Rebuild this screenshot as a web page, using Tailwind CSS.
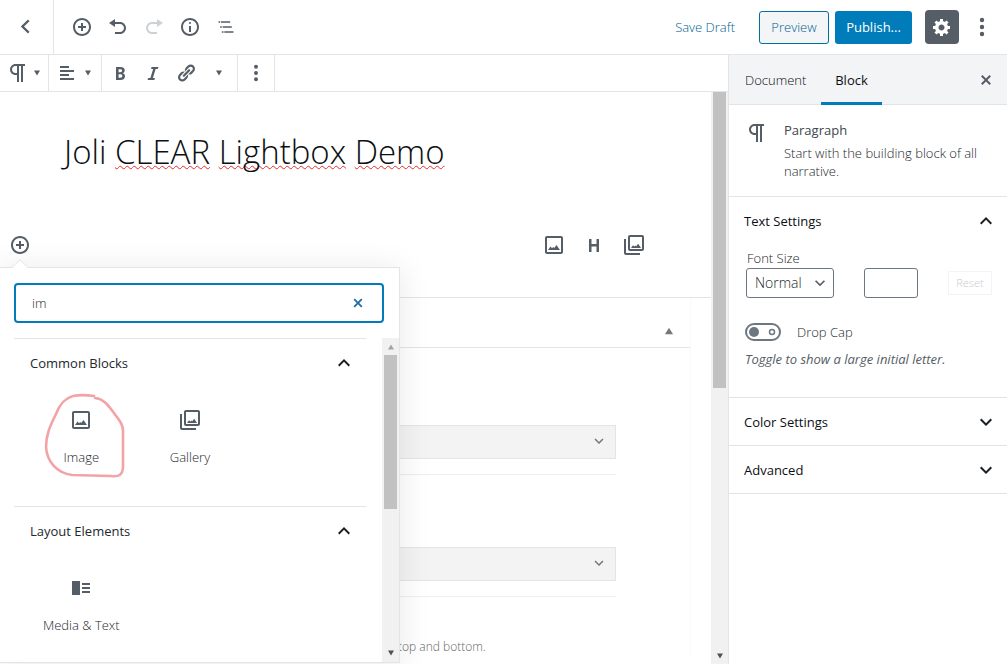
<!DOCTYPE html>
<html lang="en">
<head>
<meta charset="utf-8">
<title>Edit Page</title>
<script src="https://cdn.jsdelivr.net/npm/@tailwindcss/browser@4"></script>
</head>
<body class="h-screen overflow-hidden bg-white font-['Open_Sans',sans-serif] text-[13px] leading-[18px] font-light text-[#23282d]">
<svg class="hidden">
  <symbol id="plus" viewBox="0 0 20 20"><path d="M10 1c-5 0-9 4-9 9s4 9 9 9 9-4 9-9-4-9-9-9zm0 16c-3.9 0-7-3.1-7-7s3.1-7 7-7 7 3.1 7 7-3.1 7-7 7zm1-11H9v3H6v2h3v3h2v-3h3V9h-3V6z"/></symbol>
  <symbol id="image" viewBox="0 0 24 24"><path d="M19 5v14H5V5h14m0-2H5c-1.100 0-2 .9-2 2v14c0 1.100.9 2 2 2h14c1.100 0 2-.9 2-2V5c0-1.100-.9-2-2-2z"/><path d="M6 17l2.500-3.400 1.500 1.600 1.200-1.200 1 1 2.300-3L18 17z"/></symbol>
  <symbol id="gallery" viewBox="0 0 24 24"><path d="M20 4v12H8V4h12m0-2H8c-1.100 0-2 .9-2 2v12c0 1.100.9 2 2 2h12c1.100 0 2-.9 2-2V4c0-1.100-.9-2-2-2z"/><path d="M9 15l2-2.800 1.400 1.300 1-1 .8.8 2-2.500L19 15z"/><path d="M2 6v14c0 1.100.9 2 2 2h14v-2H4V6z"/></symbol>
  <symbol id="para" viewBox="0 0 24 24"><path d="M11 5v7H9.500C7.600 12 6 10.400 6 8.500S7.600 5 9.500 5H11m8-2H9.500C6.500 3 4 5.500 4 8.500S6.500 14 9.500 14H11v7h2V5h2v16h2V5h2V3z"/></symbol>
  <symbol id="up" viewBox="0 0 24 24"><path d="M7.410 15.410 12 10.830l4.590 4.580L18 14l-6-6-6 6z"/></symbol>
  <symbol id="down" viewBox="0 0 24 24"><path d="M7.410 8.590 12 13.170l4.590-4.580L18 10l-6 6-6-6z"/></symbol>
  <symbol id="caret" viewBox="0 0 6 6"><path d="M0 .5h6L3 5.500z"/></symbol>
  <symbol id="dots" viewBox="0 0 20 20"><circle cx="10" cy="3" r="2.200"/><circle cx="10" cy="10" r="2.200"/><circle cx="10" cy="17" r="2.200"/></symbol>
  <symbol id="close" viewBox="0 0 20 20"><path d="M14.950 6.460L11.410 10l3.540 3.540-1.410 1.410L10 11.420l-3.530 3.530-1.420-1.420L8.580 10 5.050 6.470l1.420-1.420L10 8.580l3.540-3.530z"/></symbol>
</svg>
<div class="flex h-full flex-col">
  <header class="flex h-[55px] shrink-0 items-center border-b border-[#e2e4e7]">
    <a href="#" aria-label="Back" class="flex h-full w-[54px] items-center justify-center border-r border-[#e2e4e7]"><svg class="size-5 fill-[#555d66]" viewBox="0 0 20 20"><path d="M12.500 4.200 7 9.500l5.500 5.300-1.500 1.700L3.800 9.500l7.200-7z"/></svg></a>
    <div class="flex flex-1 items-center gap-4 pl-[18px]">
      <button aria-label="Add block"><svg class="size-5 fill-[#555d66]"><use href="#plus"/></svg></button>
      <button aria-label="Undo"><svg class="size-5 fill-[#555d66]" viewBox="0 0 20 20"><path d="M12 5H7V2L1 6l6 4V7h5c2.200 0 4 1.800 4 4s-1.800 4-4 4H7v2h5c3.300 0 6-2.700 6-6s-2.700-6-6-6z"/></svg></button>
      <button aria-label="Redo" disabled><svg class="size-5 fill-[#cfd2d5]" viewBox="0 0 20 20"><path d="M8 5h5V2l6 4-6 4V7H8c-2.200 0-4 1.800-4 4s1.800 4 4 4h5v2H8c-3.300 0-6-2.700-6-6s2.700-6 6-6z"/></svg></button>
      <button aria-label="Content structure"><svg class="size-5 fill-[#555d66]" viewBox="0 0 20 20"><path d="M9 15h2V9H9v6zm1-10c-.5 0-1 .5-1 1s.5 1 1 1 1-.5 1-1-.5-1-1-1zm0-4c-5 0-9 4-9 9s4 9 9 9 9-4 9-9-4-9-9-9zm0 16c-3.900 0-7-3.100-7-7s3.100-7 7-7 7 3.100 7 7-3.100 7-7 7z"/></svg></button>
      <button aria-label="Block navigation"><svg class="size-5 fill-[#555d66]" viewBox="0 0 24 24"><path d="M5 5H3v2h2V5zm3 8h11v-2H8v2zm9-8H6v2h11V5zM7 11H5v2h2v-2zm0 8h2v-2H7v2zm3-2v2h11v-2H10z"/></svg></button>
    </div>
    <div class="flex items-center pr-[15px]">
      <button class="mr-6 text-[#005f95]">Save Draft</button>
      <button class="mr-1.5 h-[33px] w-[70px] rounded-[3px] border border-[#0071a1] bg-[#f3f5f6] text-[#005f95]">Preview</button>
      <button class="mr-[13px] h-[33px] w-[77px] rounded-[3px] bg-[#007cba] font-medium text-white">Publish...</button>
      <button aria-label="Settings" class="mr-[13px] flex size-[34px] items-center justify-center rounded bg-[#555d66]"><svg class="size-5 fill-white" viewBox="0 0 20 20"><path d="M18 12h-2.180c-.17.7-.44 1.350-.81 1.930l1.540 1.540-2.100 2.100-1.540-1.540c-.58.36-1.230.63-1.910.79V19H8v-2.180c-.68-.16-1.330-.43-1.910-.79l-1.540 1.540-2.120-2.120 1.540-1.540c-.36-.58-.63-1.230-.79-1.910H1V9.030h2.170c.16-.7.44-1.350.8-1.940L2.430 5.550l2.100-2.100 1.540 1.540c.58-.37 1.240-.64 1.930-.81V2h3v2.180c.68.16 1.330.43 1.910.79l1.540-1.540 2.120 2.120-1.540 1.540c.36.59.64 1.240.8 1.940H18V12zm-8.500 1.500c1.660 0 3-1.340 3-3s-1.340-3-3-3-3 1.340-3 3 1.340 3 3 3z"/></svg></button>
      <button aria-label="More"><svg class="size-5 fill-[#555d66]"><use href="#dots"/></svg></button>
    </div>
  </header>

  <div class="flex min-h-0 flex-1">
    <main class="flex min-w-0 flex-1 flex-col">
      <div class="flex h-[37px] shrink-0 border-b border-[#e2e4e7]">
        <button aria-label="Change block type" class="flex w-[49px] items-center gap-1 border-r border-[#e2e4e7] pl-[6px]"><svg class="size-6 fill-[#555d66]"><use href="#para"/></svg><svg class="size-[6px] fill-[#555d66]"><use href="#caret"/></svg></button>
        <button aria-label="Align" class="flex w-[53px] items-center gap-2 border-r border-[#e2e4e7] pl-2"><svg class="size-5 fill-[#555d66]" viewBox="0 0 20 20"><path d="M12 5V3H3v2h9zm5 4V7H3v2h14zm-5 4v-2H3v2h9zm5 4v-2H3v2h14z"/></svg><svg class="size-[6px] fill-[#555d66]"><use href="#caret"/></svg></button>
        <div class="flex w-[136px] items-center gap-[13px] border-r border-[#e2e4e7] pl-2">
          <button aria-label="Bold"><svg class="size-5 fill-[#555d66]" viewBox="0 0 20 20"><path d="M6 4v13h4.540c1.370 0 2.460-.33 3.260-1 .8-.66 1.200-1.580 1.200-2.770 0-.84-.17-1.510-.51-2.010s-.9-.85-1.670-1.030v-.09c.57-.1 1.020-.4 1.360-.9s.51-1.130.51-1.910c0-1.140-.39-1.980-1.170-2.500C12.750 4.260 11.500 4 9.780 4H6zm2.570 5.150V6.260h1.360c.73 0 1.270.11 1.610.32.34.22.51.58.51 1.070 0 .54-.16.92-.47 1.150s-.82.35-1.510.35h-1.500zm0 2.190h1.600c1.440 0 2.160.53 2.160 1.610 0 .6-.17 1.050-.51 1.340s-.86.43-1.570.43H8.570v-3.380z"/></svg></button>
          <button aria-label="Italic"><svg class="size-5 fill-[#555d66]" viewBox="0 0 20 20"><path d="M14.780 6h-2.130l-2.800 9h2.120l-.62 2H4.600l.62-2h2.140l2.800-9H8.030l.62-2h6.750z"/></svg></button>
          <button aria-label="Link"><svg class="size-5 fill-[#555d66]" viewBox="0 0 20 20"><path d="M17.740 2.760c1.680 1.690 1.680 4.410 0 6.100l-1.530 1.520c-1.120 1.120-2.700 1.470-4.140 1.090l2.620-2.610.76-.77.76-.76c.84-.84.84-2.200 0-3.040-.84-.85-2.200-.85-3.040 0l-.77.76-3.380 3.380c-.37-1.440-.02-3.020 1.100-4.140l1.520-1.530c1.690-1.680 4.420-1.680 6.100 0zM8.590 13.430l5.340-5.340c.42-.42.42-1.100 0-1.520-.44-.43-1.130-.39-1.530 0l-5.330 5.340c-.42.42-.42 1.100 0 1.520.44.43 1.130.39 1.520 0zm-.76 2.290l4.140-4.150c.38 1.440.03 3.020-1.090 4.140l-1.520 1.530c-1.690 1.680-4.410 1.680-6.100 0-1.680-1.680-1.680-4.420 0-6.100l1.530-1.520c1.120-1.120 2.700-1.470 4.140-1.100l-4.140 4.150c-.85.84-.85 2.200 0 3.050.84.84 2.200.84 3.040 0z"/></svg></button>
          <button aria-label="More rich text controls" class="flex w-5 justify-center"><svg class="size-[6px] fill-[#555d66]"><use href="#caret"/></svg></button>
        </div>
        <button aria-label="More options" class="flex w-[37px] items-center justify-center border-r border-[#e2e4e7]"><svg class="h-[18px] w-[18px] fill-[#555d66]"><use href="#dots"/></svg></button>
      </div>

      <div class="relative flex min-h-0 flex-1">
        <div class="min-w-0 flex-1 overflow-hidden">
          <div class="h-[206px] border-b border-[#e2e4e7]">
            <h1 class="pt-[37px] pl-16 text-[33px] leading-[46px] text-[#0b0f13]">Joli <span class="underline decoration-[#e0302d] decoration-wavy decoration-1 underline-offset-1">CLEAR</span> <span class="underline decoration-[#e0302d] decoration-wavy decoration-1 underline-offset-1 [text-decoration-skip-ink:none]">Lightbox</span> <span class="underline decoration-[#e0302d] decoration-wavy decoration-1 underline-offset-1">Demo</span></h1>
            <div class="mt-[58px] flex items-center justify-between pr-[65px] pl-[10px]">
              <button aria-label="Add block"><svg class="size-5 fill-[#555d66]"><use href="#plus"/></svg></button>
              <div class="flex gap-4">
                <button aria-label="Add Image"><svg class="size-6 fill-[#555d66]"><use href="#image"/></svg></button>
                <button aria-label="Add Heading"><svg class="size-6 fill-[#555d66]" viewBox="0 0 24 24"><path d="M7 6h2.500v5h5V6H17v13h-2.500v-5.500h-5V19H7z"/></svg></button>
                <button aria-label="Add Gallery"><svg class="size-6 fill-[#555d66]"><use href="#gallery"/></svg></button>
              </div>
            </div>
          </div>
          <div class="mr-5 border-r border-[#fafafa]">
            <div class="flex h-[50px] items-center justify-end border-b border-[#e2e4e7] pt-4 pr-[17px]"><button aria-label="Toggle panel"><svg class="size-2 rotate-180 fill-[#72777c]"><use href="#caret"/></svg></button></div>
            <div class="pt-[77px] pr-[74px]">
              <div class="relative border-b border-[#eee] pb-[15px]"><select aria-label="First option" class="h-[34px] w-full appearance-none border border-[#e4e4e4] bg-[#f3f3f3]"></select><svg class="pointer-events-none absolute top-[7px] right-2 size-[18px] fill-[#72777c]"><use href="#down"/></svg></div>
              <div class="relative mt-[72px] border-b border-[#eee] pb-[15px]"><select aria-label="Second option" class="h-[34px] w-full appearance-none border border-[#e4e4e4] bg-[#f3f3f3]"></select><svg class="pointer-events-none absolute top-[7px] right-2 size-[18px] fill-[#72777c]"><use href="#down"/></svg></div>
              <p class="pt-[41px] pl-[398px] text-xs leading-[18px] whitespace-nowrap text-[#666]">top and bottom.</p>
            </div>
          </div>
        </div>
        <div class="flex w-[17px] shrink-0 flex-col items-center justify-between bg-[#f1f1f1] pb-[5px]"><div class="h-[296px] w-[13px] bg-[#c1c1c1]"></div><svg class="h-[6px] w-2 fill-[#505050]"><use href="#caret"/></svg></div>

        <!-- Block inserter popover -->
        <div class="absolute top-[175px] left-0 flex h-[396px] w-[400px] flex-col border-y border-r border-[#e2e4e7] bg-white shadow-[0_3px_30px_rgba(25,30,35,0.1)]">
          <svg class="absolute -top-[9px] left-3 h-[10px] w-4" viewBox="0 0 16 10"><path d="M0 9 8 1l8 8v1H0z" fill="#fff"/><path d="M0 8.500 8 .7l8 7.800" fill="none" stroke="#e2e4e7"/></svg>
          <div class="relative px-[15px] pt-[15px] pb-[15px] pl-[14px]">
            <input aria-label="Search for a block" value="im" class="h-10 w-full rounded border-2 border-[#007cba] bg-white pl-4 outline-none">
            <button aria-label="Clear search" class="absolute top-[26px] right-8"><svg class="size-[18px] fill-[#1f6fa5]"><use href="#close"/></svg></button>
          </div>
          <div class="flex min-h-0 flex-1">
            <div class="min-w-0 flex-1 pr-4 pl-[14px]">
              <section class="h-[168px] border-t border-[#e2e4e7]">
                <h2><button class="mb-0.5 flex h-[47px] w-full items-center justify-between pr-[10px] pl-4 font-medium text-[#23282d]">Common Blocks<svg class="size-6 fill-[#191e23]"><use href="#up"/></svg></button></h2>
                <div class="grid grid-cols-3 px-[13px]">
                  <button class="relative flex flex-col items-center gap-4 pt-5"><svg class="size-6 fill-[#555d66]"><use href="#image"/></svg>Image
                    <svg class="absolute top-1 left-4 h-[86px] w-[84px]" viewBox="0 0 84 86" fill="none" stroke="#f3a3a6" stroke-width="2.600" stroke-linecap="round" stroke-linejoin="round"><path d="M51 4C44 3 35 3 30 4 20 7 16 14 13 22 7 34 3 43 3 55c1 15 11 26 26 28l39 1c8 1 12-1 12-10V39c0-7-4-11-9-18C65 13 61 7 52 6"/></svg>
                  </button>
                  <button class="flex flex-col items-center gap-4 pt-5"><svg class="size-6 fill-[#555d66]"><use href="#gallery"/></svg>Gallery</button>
                </div>
              </section>
              <section class="border-t border-[#e2e4e7]">
                <h2><button class="mb-0.5 flex h-[47px] w-full items-center justify-between pr-[10px] pl-4 font-medium text-[#23282d]">Layout Elements<svg class="size-6 fill-[#191e23]"><use href="#up"/></svg></button></h2>
                <div class="grid grid-cols-3 px-[13px]">
                  <button class="flex flex-col items-center gap-4 pt-5 whitespace-nowrap"><svg class="size-6 fill-[#555d66]" viewBox="0 0 24 24"><path d="M13 17h8v-2h-8v2zM3 19h8V5H3v14zM13 9h8V7h-8v2zm0 4h8v-2h-8v2z"/></svg>Media &amp; Text</button>
                </div>
              </section>
            </div>
            <div class="flex w-[17px] flex-col items-center bg-[#f1f1f1] py-[6px]"><svg class="mb-[5px] h-[6px] w-2 shrink-0 rotate-180 fill-[#a3a3a3]"><use href="#caret"/></svg><div class="h-[154px] w-[13px] shrink-0 bg-[#c1c1c1]"></div><svg class="mt-auto h-[6px] w-2 fill-[#505050]"><use href="#caret"/></svg></div>
          </div>
        </div>
      </div>
    </main>

    <aside class="w-[279px] shrink-0 border-l border-[#e2e4e7]">
      <div class="flex h-[50px] items-stretch border-b border-[#e2e4e7] bg-[#f3f4f5] text-[#0b0f13]">
        <button class="w-[92px] pl-4 text-left">Document</button>
        <button class="-mb-px w-[61px] border-b-3 border-[#007cba] pt-[3px] font-medium">Block</button>
        <button aria-label="Close settings" class="mr-[11px] ml-auto"><svg class="size-5 fill-[#555d66]"><use href="#close"/></svg></button>
      </div>
      <section class="flex gap-[15px] border-b border-[#e2e4e7] p-4">
        <svg class="size-6 shrink-0 fill-[#555d66]"><use href="#para"/></svg>
        <div><h2 class="mb-[5px] font-medium text-[#40464d]">Paragraph</h2><p>Start with the building block of all narrative.</p></div>
      </section>
      <section class="border-b border-[#e2e4e7] pb-[29px]">
        <h2><button class="flex h-12 w-full items-center justify-between pr-[9px] pl-[15px] font-medium text-[#0b0f13]">Text Settings<svg class="size-6 fill-[#191e23]"><use href="#up"/></svg></button></h2>
        <div class="pr-[15px] pl-4">
          <label for="size" class="block pt-1 pb-px pl-0.5">Font Size</label>
          <div class="flex items-center justify-between pl-px">
            <div class="relative"><select id="size" class="h-[30px] w-[88px] appearance-none rounded-[3px] border border-[#6c7781] bg-white pl-2 text-sm text-[#23282d]"><option>Normal</option></select><svg class="pointer-events-none absolute top-[5px] right-1 size-5 fill-[#555d66]"><use href="#down"/></svg></div>
            <input aria-label="Custom font size" class="h-[30px] w-[54px] rounded-[3px] border border-[#6c7781]">
            <button disabled class="h-6 w-11 border border-[#f3f4f5] text-[11px] text-[#c8ccd0]">Reset</button>
          </div>
          <label class="mt-[25px] flex items-center gap-4">
            <input type="checkbox" class="peer sr-only"><svg class="h-[18px] w-9" viewBox="0 0 36 18"><rect x="1" y="1" width="34" height="16" rx="8" fill="#fff" stroke="#6c7781" stroke-width="2"/><circle cx="9" cy="9" r="5" fill="#6c7781"/><circle cx="27" cy="9" r="2.500" fill="none" stroke="#6c7781" stroke-width="1.500"/></svg>Drop Cap
          </label>
          <p class="mt-[9px] font-normal text-[#555d66] italic">Toggle to show a large initial letter.</p>
        </div>
      </section>
      <h2 class="border-b border-[#e2e4e7]"><button class="flex h-[47px] w-full items-center justify-between pr-[9px] pl-[15px] font-medium text-[#0b0f13]">Color Settings<svg class="size-6 fill-[#191e23]"><use href="#down"/></svg></button></h2>
      <h2 class="border-b border-[#e2e4e7]"><button class="flex h-[47px] w-full items-center justify-between pr-[9px] pl-[15px] font-medium text-[#0b0f13]">Advanced<svg class="size-6 fill-[#191e23]"><use href="#down"/></svg></button></h2>
    </aside>
  </div>
</div>
</body>
</html>
